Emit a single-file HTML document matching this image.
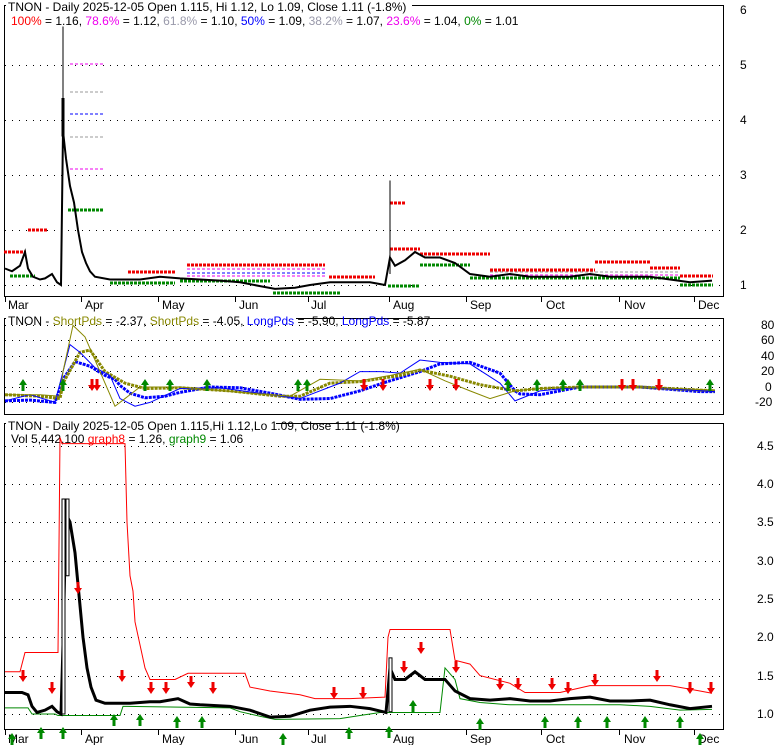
<!DOCTYPE html><html><head><style>
body{margin:0;background:#fff;width:780px;height:745px;overflow:hidden;font-family:"Liberation Sans",sans-serif}
svg text{font-family:"Liberation Sans",sans-serif;font-size:12px}
</style></head><body>
<svg width="780" height="745" xmlns="http://www.w3.org/2000/svg">
<defs>
<g id="up"><path d="M-4 0 L0 -6 L4 0 L1.5 0 L1.5 6 L-1.5 6 L-1.5 0Z" fill="#080"/></g>
<g id="dn"><path d="M-4 0 L0 6 L4 0 L1.5 0 L1.5 -6 L-1.5 -6 L-1.5 0Z" fill="#e00"/></g>
</defs>
<g fill="none" stroke="#000">
<rect x="4.5" y="5.5" width="719" height="291"/>
<rect x="4.5" y="318.5" width="719" height="96"/>
<rect x="4.5" y="423.5" width="719" height="306"/>
</g>
<g stroke="#000" stroke-dasharray="1 6" stroke-width="1">
<line x1="5" x2="723" y1="65.5" y2="65.5"/><line x1="5" x2="723" y1="120.5" y2="120.5"/><line x1="5" x2="723" y1="175.5" y2="175.5"/><line x1="5" x2="723" y1="230.5" y2="230.5"/><line x1="5" x2="723" y1="285.5" y2="285.5"/>
<line x1="5" x2="723" y1="325.5" y2="325.5"/><line x1="5" x2="723" y1="340.5" y2="340.5"/><line x1="5" x2="723" y1="356.5" y2="356.5"/><line x1="5" x2="723" y1="371.5" y2="371.5"/><line x1="5" x2="723" y1="387.5" y2="387.5"/><line x1="5" x2="723" y1="402.5" y2="402.5"/>
<line x1="5" x2="723" y1="446.5" y2="446.5"/><line x1="5" x2="723" y1="484.5" y2="484.5"/><line x1="5" x2="723" y1="522.5" y2="522.5"/><line x1="5" x2="723" y1="561.5" y2="561.5"/><line x1="5" x2="723" y1="599.5" y2="599.5"/><line x1="5" x2="723" y1="637.5" y2="637.5"/><line x1="5" x2="723" y1="676.5" y2="676.5"/><line x1="5" x2="723" y1="714.5" y2="714.5"/>
</g>
<g font-size="12" fill="#000">
<text x="740" y="14">6</text><text x="740" y="69">5</text><text x="740" y="124">4</text><text x="740" y="179">3</text><text x="740" y="234">2</text><text x="740" y="289">1</text>
<text x="761" y="329">80</text><text x="761" y="344">60</text><text x="761" y="360">40</text><text x="761" y="375">20</text><text x="765" y="391">0</text><text x="755" y="406">-20</text>
<text x="757" y="450">4.5</text><text x="757" y="488">4.0</text><text x="757" y="526">3.5</text><text x="757" y="565">3.0</text><text x="757" y="603">2.5</text><text x="757" y="641">2.0</text><text x="757" y="680">1.5</text><text x="757" y="718">1.0</text>
</g>
<g font-size="12">
<text x="8" y="309">Mar</text><text x="85" y="309">Apr</text><text x="162" y="309">May</text><text x="239" y="309">Jun</text><text x="311" y="309">Jul</text><text x="393" y="309">Aug</text><text x="470" y="309">Sep</text><text x="546" y="309">Oct</text><text x="624" y="309">Nov</text><text x="698" y="309">Dec</text>
<text x="8" y="743">Mar</text><text x="85" y="743">Apr</text><text x="162" y="743">May</text><text x="239" y="743">Jun</text><text x="311" y="743">Jul</text><text x="393" y="743">Aug</text><text x="470" y="743">Sep</text><text x="546" y="743">Oct</text><text x="624" y="743">Nov</text><text x="698" y="743">Dec</text>
</g>
<g stroke="#000"><line x1="5.5" y1="297" x2="5.5" y2="302"/><line x1="81.5" y1="297" x2="81.5" y2="302"/><line x1="158.5" y1="297" x2="158.5" y2="302"/><line x1="235.5" y1="297" x2="235.5" y2="302"/><line x1="308.5" y1="297" x2="308.5" y2="302"/><line x1="389.5" y1="297" x2="389.5" y2="302"/><line x1="466.5" y1="297" x2="466.5" y2="302"/><line x1="541.5" y1="297" x2="541.5" y2="302"/><line x1="619.5" y1="297" x2="619.5" y2="302"/><line x1="694.5" y1="297" x2="694.5" y2="302"/>
<line x1="5.5" y1="730" x2="5.5" y2="735"/><line x1="81.5" y1="730" x2="81.5" y2="735"/><line x1="158.5" y1="730" x2="158.5" y2="735"/><line x1="235.5" y1="730" x2="235.5" y2="735"/><line x1="308.5" y1="730" x2="308.5" y2="735"/><line x1="389.5" y1="730" x2="389.5" y2="735"/><line x1="466.5" y1="730" x2="466.5" y2="735"/><line x1="541.5" y1="730" x2="541.5" y2="735"/><line x1="619.5" y1="730" x2="619.5" y2="735"/><line x1="694.5" y1="730" x2="694.5" y2="735"/></g>
<rect x="6" y="0" width="406" height="12" fill="#fff"/>
<text x="8" y="11">TNON - Daily 2025-12-05 Open 1.115, Hi 1.12, Lo 1.09, Close 1.11 (-1.8%)</text>
<text x="11" y="25"><tspan fill="#f00">100%</tspan> = 1.16, <tspan fill="#e0e">78.6%</tspan> = 1.12, <tspan fill="#99a">61.8%</tspan> = 1.10, <tspan fill="#00f">50%</tspan> = 1.09, <tspan fill="#99a">38.2%</tspan> = 1.07, <tspan fill="#e0e">23.6%</tspan> = 1.04, <tspan fill="#080">0%</tspan> = 1.01</text>
<rect x="6" y="313" width="290" height="12" fill="#fff"/>
<text x="8" y="325">TNON - <tspan fill="#880">ShortPds</tspan> = -2.37, <tspan fill="#880">ShortPds</tspan> = -4.05, <tspan fill="#00f">LongPds</tspan> = -5.90, <tspan fill="#00f">LongPds</tspan> = -5.87</text>
<rect x="6" y="418" width="270" height="12" fill="#fff"/>
<text x="8" y="430">TNON - Daily 2025-12-05 Open 1.115,Hi 1.12,Lo 1.09, Close 1.11 (-1.8%)</text>
<text x="11" y="443">Vol 5,442,100 <tspan fill="#f00">graph8</tspan> = 1.26, <tspan fill="#080">graph9</tspan> = 1.06</text>
<g stroke-width="3" stroke-dasharray="3 1">
<line x1="4" x2="26" y1="252" y2="252" stroke="#e00"/><line x1="28" x2="47" y1="230" y2="230" stroke="#e00"/>
<line x1="10" x2="35" y1="276" y2="276" stroke="#080"/><line x1="68" x2="104" y1="210" y2="210" stroke="#080"/>
<line x1="128" x2="175" y1="272" y2="272" stroke="#e00"/><line x1="187" x2="325" y1="265" y2="265" stroke="#e00"/>
<line x1="110" x2="175" y1="283" y2="283" stroke="#080"/><line x1="180" x2="270" y1="281" y2="281" stroke="#080"/><line x1="273" x2="340" y1="293" y2="293" stroke="#080"/>
<line x1="329" x2="375" y1="277" y2="277" stroke="#e00"/><line x1="390" x2="405" y1="203" y2="203" stroke="#e00"/><line x1="390" x2="420" y1="249" y2="249" stroke="#e00"/><line x1="420" x2="490" y1="254" y2="254" stroke="#e00"/><line x1="490" x2="595" y1="270" y2="270" stroke="#e00"/><line x1="595" x2="650" y1="262" y2="262" stroke="#e00"/><line x1="650" x2="680" y1="268" y2="268" stroke="#e00"/><line x1="680" x2="713" y1="276" y2="276" stroke="#e00"/>
<line x1="388" x2="420" y1="286" y2="286" stroke="#080"/><line x1="420" x2="470" y1="265" y2="265" stroke="#080"/><line x1="470" x2="680" y1="278" y2="278" stroke="#080"/><line x1="680" x2="713" y1="285" y2="285" stroke="#080"/>
</g>
<g stroke-width="1" stroke-dasharray="3 2">
<line x1="70" x2="103" y1="64" y2="64" stroke="#e0e"/><line x1="70" x2="103" y1="92" y2="92" stroke="#999"/><line x1="70" x2="103" y1="114" y2="114" stroke="#00f"/><line x1="70" x2="103" y1="137" y2="137" stroke="#999"/><line x1="70" x2="103" y1="169" y2="169" stroke="#e0e"/>
<line x1="187" x2="325" y1="269" y2="269" stroke="#e0e"/><line x1="187" x2="325" y1="273" y2="273" stroke="#00f"/><line x1="187" x2="325" y1="276" y2="276" stroke="#e0e"/>
<line x1="490" x2="680" y1="272" y2="272" stroke="#999"/><line x1="490" x2="680" y1="275" y2="275" stroke="#e0e"/>
</g>
<g transform="translate(0,285) scale(1,-55) translate(0,-1)">
<polyline vector-effect="non-scaling-stroke" fill="none" stroke="#000" stroke-width="2" points="5,1.3 12,1.25 20,1.35 25,1.6 28,1.3 33,1.15 40,1.1 45,1.12 52,1.2 57,1.05 61,1.0 63,3.8 66,3.3 70,2.8 74,2.5 78,2.0 82,1.6 86,1.4 90,1.25 95,1.15 110,1.1 140,1.1 160,1.15 180,1.12 200,1.1 220,1.08 240,1.05 260,0.98 275,0.93 295,0.95 310,1.0 330,1.05 350,1.05 370,1.05 385,1.0 390,1.5 395,1.35 405,1.45 415,1.6 425,1.5 440,1.5 455,1.4 470,1.2 490,1.15 510,1.2 530,1.15 550,1.15 570,1.15 590,1.2 610,1.15 630,1.15 650,1.15 670,1.1 690,1.05 712,1.08"/>
<line vector-effect="non-scaling-stroke" x1="63" x2="63" y1="5.7" y2="3" stroke="#000" stroke-width="1"/>
<line vector-effect="non-scaling-stroke" x1="63" x2="63" y1="4.4" y2="3.7" stroke="#000" stroke-width="3"/>
<line vector-effect="non-scaling-stroke" x1="390" x2="390" y1="2.9" y2="1.2" stroke="#000" stroke-width="1"/>
</g>
<g transform="translate(0,387) scale(1,-0.77)">
<polyline vector-effect="non-scaling-stroke" fill="none" stroke="#00f" stroke-width="3" stroke-dasharray="3 1" points="5,-18 30,-17 55,-20 63,10 75,33 90,27 105,15 115,10 120,2 130,-8 145,-14 165,-12 180,-7 210,0 240,-1 270,-8 300,-16 330,-15 360,-5 385,6 400,12 420,20 440,30 470,32 500,18 515,-5 520,-9 540,-10 560,-5 580,0 600,0 640,0 700,-6 715,-6"/>
<polyline vector-effect="non-scaling-stroke" fill="none" stroke="#880" stroke-width="3" stroke-dasharray="3 1" points="5,-10 40,-12 60,-15 63,5 80,45 90,48 105,20 125,5 145,-2 180,-1 230,-5 280,-12 300,-12 330,5 360,7 400,15 420,22 450,14 480,3 515,-5 540,-2 580,0 640,0 715,-5"/>
<polyline vector-effect="non-scaling-stroke" fill="none" stroke="#00f" stroke-width="1" points="5,-18 30,-10 55,-20 63,20 70,55 80,45 95,25 110,15 120,-15 135,-25 150,-20 180,-2 220,-1 270,-10 300,-15 340,5 360,20 380,20 400,18 420,35 440,32 470,30 500,5 515,-18 540,-5 580,0 640,0 715,-6"/>
<polyline vector-effect="non-scaling-stroke" fill="none" stroke="#880" stroke-width="1" points="5,-10 40,-10 60,-12 63,20 73,80 85,65 100,20 115,-25 125,-15 140,0 180,0 250,-8 290,-12 320,10 360,8 390,15 420,23 445,8 470,-5 490,-15 515,-5 540,-2 580,0 640,0 715,-4"/>
</g>
<use href="#up" x="23" y="385"/><use href="#up" x="63" y="385"/><use href="#up" x="145" y="385"/><use href="#up" x="170" y="385"/><use href="#up" x="207" y="385"/><use href="#up" x="298" y="385"/><use href="#up" x="307" y="385"/><use href="#up" x="508" y="385"/><use href="#up" x="537" y="385"/><use href="#up" x="563" y="385"/><use href="#up" x="580" y="385"/><use href="#up" x="710" y="385"/>
<use href="#dn" x="92" y="385"/><use href="#dn" x="97" y="385"/><use href="#dn" x="364" y="385"/><use href="#dn" x="383" y="385"/><use href="#dn" x="430" y="385"/><use href="#dn" x="456" y="385"/><use href="#dn" x="622" y="385"/><use href="#dn" x="633" y="385"/><use href="#dn" x="659" y="385"/>
<g transform="translate(0,714) scale(1,-76.8) translate(0,-1)">
<polyline vector-effect="non-scaling-stroke" fill="none" stroke="#f00" stroke-width="1" points="5,1.55 20,1.55 25,1.8 58,1.8 60,4.6 62,4.52 125,4.52 127,3.5 130,2.8 133,2.6 135,2.2 140,1.9 145,1.6 150,1.45 165,1.45 175,1.45 188,1.53 245,1.53 250,1.35 270,1.3 300,1.25 315,1.2 350,1.2 385,1.22 388,2.0 390,2.1 450,2.1 455,1.7 470,1.65 480,1.5 510,1.4 525,1.28 560,1.28 590,1.37 670,1.37 700,1.3 712,1.27"/>
<polyline vector-effect="non-scaling-stroke" fill="none" stroke="#080" stroke-width="1" points="5,1.08 28,1.08 32,1.0 55,1.0 58,0.98 120,0.98 123,1.1 230,1.08 240,1.03 260,0.97 275,0.93 340,0.94 360,0.98 380,1.02 390,1.02 440,1.02 445,1.6 455,1.45 460,1.2 480,1.15 510,1.12 540,1.12 560,1.12 580,1.12 620,1.12 650,1.1 680,1.05 712,1.06"/>
<polyline vector-effect="non-scaling-stroke" fill="none" stroke="#000" stroke-width="3" points="5,1.28 15,1.28 22,1.28 28,1.25 32,1.1 37,1.02 45,1.05 52,1.1 57,1.03 61,1.0 63,1.9 66,3.6 70,3.5 75,3.1 79,2.55 83,2.0 87,1.6 91,1.35 96,1.18 105,1.14 130,1.14 150,1.16 160,1.16 178,1.2 190,1.13 200,1.12 230,1.1 250,1.05 270,0.96 290,0.97 310,1.05 330,1.09 350,1.1 370,1.07 386,1.02 390,1.6 395,1.45 405,1.45 415,1.55 425,1.45 445,1.45 455,1.3 470,1.2 490,1.18 510,1.2 530,1.17 550,1.17 570,1.2 590,1.22 610,1.17 630,1.17 650,1.18 670,1.12 690,1.07 712,1.1"/>
<rect vector-effect="non-scaling-stroke" x="62" y="1.0" width="3" height="2.8" fill="#fff" stroke="#000" stroke-width="1"/>
<rect vector-effect="non-scaling-stroke" x="66" y="2.8" width="3" height="1.0" fill="#fff" stroke="#000" stroke-width="1"/>
<rect vector-effect="non-scaling-stroke" x="389" y="1.03" width="3" height="0.7" fill="#fff" stroke="#000" stroke-width="1"/>
</g>
<use href="#up" x="12" y="739"/><use href="#up" x="41" y="733"/><use href="#up" x="63" y="733"/><use href="#up" x="114" y="720"/><use href="#up" x="140" y="720"/><use href="#up" x="177" y="722"/><use href="#up" x="202" y="722"/><use href="#up" x="283" y="739"/><use href="#up" x="349" y="733"/><use href="#up" x="389" y="732"/><use href="#up" x="413" y="706"/><use href="#up" x="480" y="724"/><use href="#up" x="545" y="722"/><use href="#up" x="578" y="722"/><use href="#up" x="607" y="722"/><use href="#up" x="645" y="722"/><use href="#up" x="680" y="722"/><use href="#up" x="700" y="739"/>
<use href="#dn" x="23" y="676"/><use href="#dn" x="52" y="688"/><use href="#dn" x="78" y="588"/><use href="#dn" x="122" y="676"/><use href="#dn" x="151" y="688"/><use href="#dn" x="166" y="688"/><use href="#dn" x="191" y="682"/><use href="#dn" x="213" y="688"/><use href="#dn" x="334" y="693"/><use href="#dn" x="363" y="693"/><use href="#dn" x="404" y="667"/><use href="#dn" x="421" y="648"/><use href="#dn" x="456" y="667"/><use href="#dn" x="500" y="684"/><use href="#dn" x="518" y="684"/><use href="#dn" x="552" y="684"/><use href="#dn" x="568" y="688"/><use href="#dn" x="595" y="680"/><use href="#dn" x="657" y="676"/><use href="#dn" x="690" y="688"/><use href="#dn" x="711" y="688"/>
</svg>
</body></html>
